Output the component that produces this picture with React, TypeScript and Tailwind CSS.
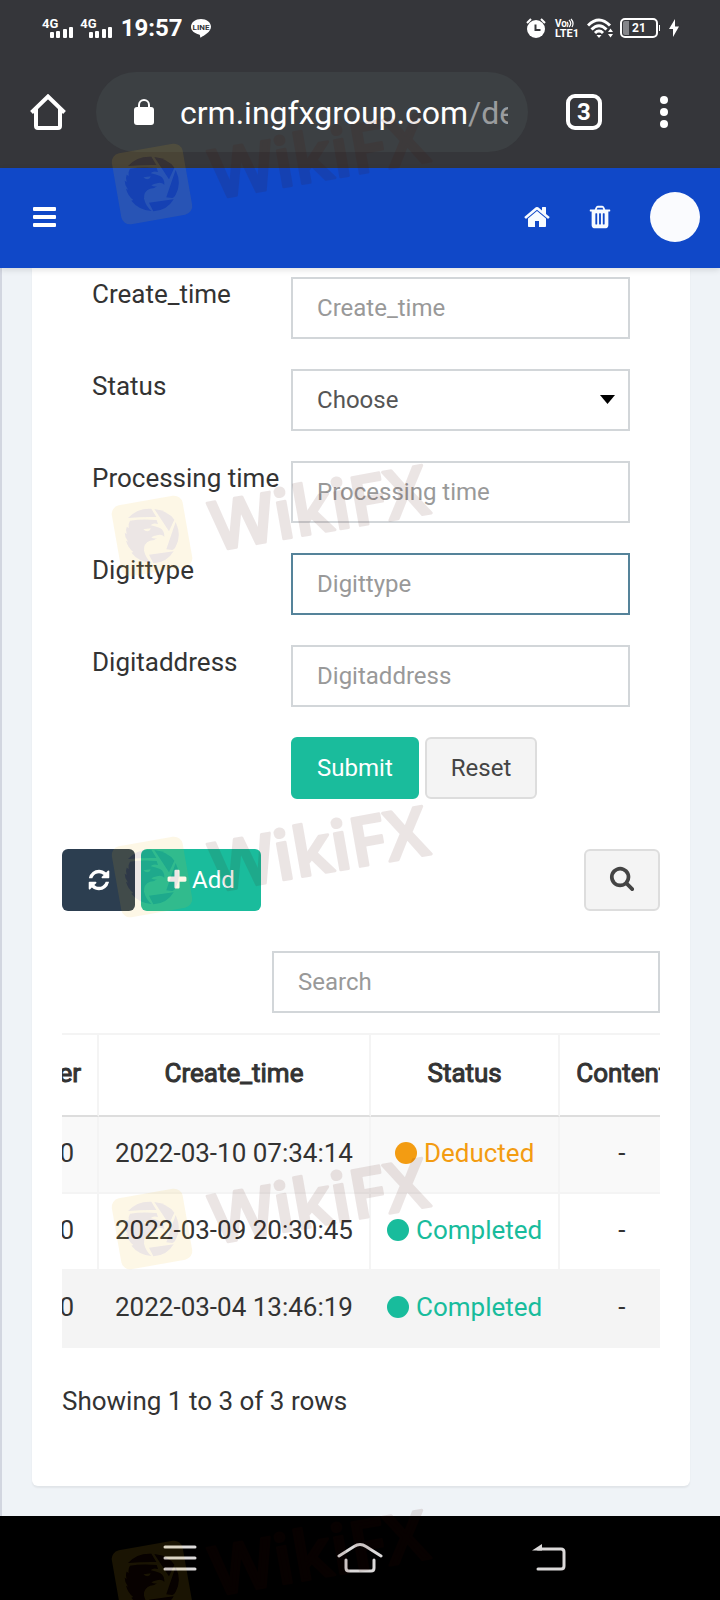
import React from 'react';

interface Field {
  id: string;
  label: string;
  type: 'text' | 'select';
  active?: boolean;
}

interface Row {
  id: number;
  order: string;
  createTime: string;
  status: 'Deducted' | 'Completed';
  content: string;
}

const fields: Field[] = [
  { id: 'create_time', label: 'Create_time', type: 'text' },
  { id: 'status', label: 'Status', type: 'select' },
  { id: 'processing_time', label: 'Processing time', type: 'text' },
  { id: 'digittype', label: 'Digittype', type: 'text', active: true },
  { id: 'digitaddress', label: 'Digitaddress', type: 'text' },
];

const rows: Row[] = [
  { id: 1, order: '0', createTime: '2022-03-10 07:34:14', status: 'Deducted', content: '-' },
  { id: 2, order: '0', createTime: '2022-03-09 20:30:45', status: 'Completed', content: '-' },
  { id: 3, order: '0', createTime: '2022-03-04 13:46:19', status: 'Completed', content: '-' },
];

const rowColors = ['bg-[#f9f9f9]', 'bg-white', 'bg-[#f4f4f4]'];

const glyphs = {
  home: 'M1472 992v480q0 26-19 45t-45 19h-384v-384h-256v384h-384q-26 0-45-19t-19-45v-480q0-1 .5-3t.5-3l575-474 575 474q1 2 1 6zm223-69l-62 74q-8 9-21 11h-3q-13 0-21-7l-692-577-692 577q-12 8-24 7-13-2-21-11l-62-74q-8-10-7-23.500t11-21.500l719-599q32-26 76-26t76 26l244 204v-195q0-14 9-23t23-9h192q14 0 23 9t9 23v408l219 182q10 8 11 21.500t-7 23.500z',
  trash:
    'M704 1376v-704q0-14-9-23t-23-9h-64q-14 0-23 9t-9 23v704q0 14 9 23t23 9h64q14 0 23-9t9-23zm256 0v-704q0-14-9-23t-23-9h-64q-14 0-23 9t-9 23v704q0 14 9 23t23 9h64q14 0 23-9t9-23zm256 0v-704q0-14-9-23t-23-9h-64q-14 0-23 9t-9 23v704q0 14 9 23t23 9h64q14 0 23-9t9-23zm-544-992h448l-48-117q-7-9-17-11h-317q-10 2-17 11zm928 32v64q0 14-9 23t-23 9h-96v948q0 83-47 143.500t-113 60.500h-832q-66 0-113-58.500t-47-141.500v-952h-96q-14 0-23-9t-9-23v-64q0-14 9-23t23-9h309l70-167q15-37 54-63t79-26h320q40 0 79 26t54 63l70 167h309q14 0 23 9t9 23z',
  refresh:
    'M1639 1056q0 5-1 7-64 268-268 434.500t-478 166.500q-146 0-282.500-55t-243.500-157l-129 129q-19 19-45 19t-45-19-19-45v-448q0-26 19-45t45-19h448q26 0 45 19t19 45-19 45l-137 137q71 66 161 102t187 36q134 0 250-65t186-179q11-17 53-117 8-23 30-23h192q13 0 22.500 9.500t9.500 22.500zm25-800v448q0 26-19 45t-45 19h-448q-26 0-45-19t-19-45 19-45l138-138q-148-137-349-137-134 0-250 65t-186 179q-11 17-53 117-8 23-30 23h-199q-13 0-22.500-9.500t-9.500-22.500v-7q65-268 270-434.500t480-166.500q146 0 284 55.500t245 156.500l130-129q19-19 45-19t45 19 19 45z',
  plus: 'M1600 736v192q0 40-28 68t-68 28h-416v416q0 40-28 68t-68 28h-192q-40 0-68-28t-28-68v-416h-416q-40 0-68-28t-28-68v-192q0-40 28-68t68-28h416v-416q0-40 28-68t68-28h192q40 0 68 28t28 68v416h416q40 0 68 28t28 68z',
  search:
    'M1216 832q0-185-131.500-316.500t-316.500-131.500-316.500 131.500-131.500 316.500 131.500 316.500 316.500 131.500 316.500-131.500 131.500-316.500zm512 832q0 52-38 90t-90 38q-54 0-90-38l-343-342q-179 124-399 124-143 0-273.500-55.500t-225-150-150-225-55.500-273.500 55.500-273.500 150-225 225-150 273.500-55.500 273.500 55.500 225 150 150 225 55.500 273.500q0 220-124 399l343 343q37 37 37 90z',
};

const Glyph: React.FC<{ name: keyof typeof glyphs; className?: string }> = ({ name, className }) => (
  <svg viewBox="0 0 1792 1792" fill="currentColor" className={className} aria-hidden="true">
    <path d={glyphs[name]} />
  </svg>
);

const Signal = () => (
  <div className="flex items-start">
    <span className="text-[13px] leading-3 font-bold">4G</span>
    <svg className="-ml-2 mt-2 h-3 w-6" viewBox="0 0 24 12" fill="currentColor" aria-hidden="true">
      <rect x="0" y="6" width="4" height="6" rx="1" />
      <rect x="6" y="5" width="4" height="7" rx="1" />
      <rect x="13" y="3" width="4" height="9" rx="1" />
      <rect x="19" y="1" width="4" height="11" rx="1" />
    </svg>
  </div>
);

const StatusBar = () => (
  <div className="flex h-14 items-center justify-between pr-[41px] pl-[42px]">
    <div className="flex items-center">
      <div className="flex gap-[6px]">
        <Signal />
        <Signal />
      </div>
      <span className="ml-2 text-[24px] leading-7 font-bold">19:57</span>
      <svg className="ml-2 h-5 w-5" viewBox="0 0 20 20" overflow="visible" aria-hidden="true">
        <path d="M10 1C4.600 1 0 4.300 0 8.800c0 3.800 3.400 6.800 8 7.600.8.200 1 .6 1 1.200l.2 1.700c.1.300.4.300.7.100C13 17.500 20 14 20 8.800 20 4.300 15.400 1 10 1z" fill="#fff" />
        <text x="10" y="12" textAnchor="middle" fontSize="8" fontWeight="700" fill="#35363a">
          LINE
        </text>
      </svg>
    </div>
    <div className="flex items-center">
      <svg className="h-5 w-5" viewBox="0 0 20 20" aria-hidden="true">
        <circle cx="10" cy="11" r="9" fill="#fff" />
        <path d="M1 5l4-4M19 5l-4-4" stroke="#fff" strokeWidth="2" />
        <path d="M9.500 6.500v5.500h5" stroke="#35363a" strokeWidth="2" fill="none" />
      </svg>
      <svg className="ml-[9px] h-5 w-6" viewBox="0 0 24 20" overflow="visible" fill="#fff" aria-hidden="true">
        <text x="0" y="9" fontSize="10" fontWeight="700">
          Vo
        </text>
        <path d="M12 4q2 2 0 5M14 2q3.500 3.500 0 7M16 1q3.500 4 1 8" stroke="#fff" strokeWidth="1.200" fill="none" />
        <text x="0" y="19" fontSize="11" fontWeight="700">
          LTE1
        </text>
      </svg>
      <svg className="ml-2 h-5 w-[26px]" viewBox="0 0 26 20" fill="none" stroke="#fff" aria-hidden="true">
        <path d="M1 7.500Q12 -3.500 23 7.500" strokeWidth="3" />
        <path d="M4.500 11.500Q12 4 19.500 11.500" strokeWidth="3" />
        <path d="M8 15Q12 11 16 15" strokeWidth="3" />
        <path d="M9.500 17L12 20l2.500-3z" fill="#fff" stroke="none" />
        <path d="M21 14l2.500-3.500L26 14zM21 16l2.500 3.500L26 16z" fill="#fff" stroke="none" />
      </svg>
      <div className="ml-[7px] flex items-center">
        <div className="flex h-5 w-[38px] items-center rounded-[5px] border-2 border-white">
          <span className="ml-px h-[14px] w-[6px] rounded-l-[2px] bg-[#85868a]" />
          <span className="ml-[3px] text-[12px] leading-4 font-bold">21</span>
        </div>
        <span className="ml-px h-[6px] w-px bg-white" />
      </div>
      <svg className="ml-[9px] h-[18px] w-[10px]" viewBox="0 0 10 18" fill="#fff" aria-hidden="true">
        <path d="M6 0L0 10h4v8l6-10.500H6z" />
      </svg>
    </div>
  </div>
);

const AddressBar = () => (
  <div className="flex items-center py-4 pr-[52px] pl-[30px]">
    <button type="button" aria-label="Home page">
      <svg className="block h-9 w-9" viewBox="0 0 36 36" fill="none" stroke="#fff" strokeWidth="4" aria-hidden="true">
        <path d="M1.500 18.500L18 2.500l16.500 16" />
        <path d="M6 15v17q0 2 2 2h20q2 0 2-2V15" />
      </svg>
    </button>
    <div className="ml-[30px] flex h-20 min-w-0 flex-1 items-center rounded-full bg-[#3c4043] pr-5 pl-[38px]">
      <svg className="h-[26px] w-5 shrink-0" viewBox="0 0 20 26" aria-hidden="true">
        <rect x="0" y="8" width="20" height="18" rx="3" fill="#fff" />
        <path d="M5 9V6a5 5 0 0 1 10 0v3" fill="none" stroke="#fff" strokeWidth="2" />
      </svg>
      <span className="ml-[26px] flex-1 overflow-hidden pt-[2px] text-[32px] leading-10 whitespace-nowrap">
        crm.ingfxgroup.com<span className="text-[#9a9c9e]">/de</span>
      </span>
    </div>
    <button
      type="button"
      aria-label="Open tabs"
      className="ml-[38px] flex h-9 w-9 items-center justify-center rounded-[9px] border-4 border-white text-[24px] leading-6 font-bold"
    >
      3
    </button>
    <button type="button" aria-label="Menu" className="ml-[58px] flex flex-col gap-1">
      <span className="h-2 w-2 rounded-full bg-white" />
      <span className="h-2 w-2 rounded-full bg-white" />
      <span className="h-2 w-2 rounded-full bg-white" />
    </button>
  </div>
);

const AppHeader = () => (
  <header className="relative flex h-[100px] items-center bg-[#1048c8] pr-5 pb-[2px] pl-[33px] text-[#f7fbff] shadow-[0_2px_6px_rgba(0,0,0,0.12)]">
    <button type="button" aria-label="Toggle sidebar" className="flex flex-col gap-1">
      <span className="h-1 w-[23px] rounded-[1px] bg-white" />
      <span className="h-1 w-[23px] rounded-[1px] bg-white" />
      <span className="h-1 w-[23px] rounded-[1px] bg-white" />
    </button>
    <a href="#home" aria-label="Home" className="ml-auto">
      <Glyph name="home" className="block h-7 w-7" />
    </a>
    <button type="button" aria-label="Clear cache" className="ml-9">
      <Glyph name="trash" className="block h-[26px] w-[26px]" />
    </button>
    <button type="button" aria-label="Profile" className="ml-[37px] h-[50px] w-[50px] rounded-full bg-[#fafbfe]" />
  </header>
);

const FilterForm = () => (
  <form className="flex flex-col gap-[30px] px-[30px]" onSubmit={(e) => e.preventDefault()}>
    {fields.map((field) => (
      <div key={field.id} className="grid grid-cols-[37%_1fr] items-start">
        <label htmlFor={field.id} className="pt-px text-[26px] leading-8 whitespace-nowrap">
          {field.label}
        </label>
        {field.type === 'select' ? (
          <div className="relative">
            <select
              id={field.id}
              className="block h-[62px] w-full appearance-none border-2 border-[#d2d6d9] bg-white px-6 text-[24px] leading-8 text-[#555] outline-none"
            >
              <option>Choose</option>
            </select>
            <svg className="pointer-events-none absolute top-[26px] right-[15px] h-[9px] w-[15px]" viewBox="0 0 15 9" aria-hidden="true">
              <path d="M0 0h15L7.500 9z" />
            </svg>
          </div>
        ) : (
          <input
            id={field.id}
            type="text"
            placeholder={field.label}
            className={`block h-[62px] w-full border-2 bg-white px-6 text-[24px] leading-8 outline-none placeholder:text-[#999] ${
              field.active ? 'border-[#55839a]' : 'border-[#d2d6d9]'
            }`}
          />
        )}
      </div>
    ))}
    <div className="ml-[37%] flex gap-[6px] text-[24px] leading-8">
      <button type="submit" className="h-[62px] rounded-[6px] border-2 border-[#1abc9c] bg-[#1abc9c] px-6 text-white">
        Submit
      </button>
      <button type="reset" className="h-[62px] rounded-[6px] border-2 border-[#ddd] bg-[#f4f4f4] px-6 text-[#444]">
        Reset
      </button>
    </div>
  </form>
);

const Toolbar = () => (
  <div className="mt-[50px] flex gap-[6px] text-[24px] leading-8">
    <button type="button" aria-label="Refresh" className="flex h-[62px] w-[73px] items-center justify-center rounded-[6px] bg-[#2c3e50] text-white">
      <Glyph name="refresh" className="h-6 w-6" />
    </button>
    <button type="button" className="flex h-[62px] items-center rounded-[6px] bg-[#1abc9c] pr-[26px] pl-6 text-white">
      <Glyph name="plus" className="mr-[3px] h-6 w-6" />
      Add
    </button>
    <button
      type="button"
      aria-label="Advanced search"
      className="ml-auto flex h-[62px] w-[76px] items-center justify-center rounded-[6px] border-2 border-[#ddd] bg-[#f4f4f4] pb-1 text-[#444]"
    >
      <Glyph name="search" className="h-[26px] w-[26px]" />
    </button>
  </div>
);

const RecordsTable = () => (
  <div className="mt-5 overflow-hidden">
    <table className="-ml-5 w-max border-separate border-spacing-0 text-center text-[26px] leading-8 whitespace-nowrap">
      <thead className="[-webkit-text-stroke:1px_#333]">
        <tr className="h-[84px]">
          <th className="w-[57px] border-t-2 border-r-2 border-b-2 border-[#f4f4f4] border-b-[#ddd] pr-4 pb-1 text-right font-normal">er</th>
          <th className="border-t-2 border-r-2 border-b-2 border-[#f4f4f4] border-b-[#ddd] px-4 pb-1 font-normal">Create_time</th>
          <th className="border-t-2 border-r-2 border-b-2 border-[#f4f4f4] border-b-[#ddd] px-4 pb-1 font-normal">Status</th>
          <th className="border-t-2 border-r-2 border-b-2 border-[#f4f4f4] border-b-[#ddd] px-4 pb-1 font-normal">Content</th>
        </tr>
      </thead>
      <tbody>
        {rows.map((row, i) => (
          <tr key={row.id} className={`h-[77px] ${rowColors[i]}`}>
            <td className="border-r-2 border-b-2 border-[#f4f4f4] pr-[23px] pb-1 text-right">{row.order}</td>
            <td className="border-r-2 border-b-2 border-[#f4f4f4] px-4 pb-1">{row.createTime}</td>
            <td className="border-r-2 border-b-2 border-[#f4f4f4] px-4 pb-1">
              <span
                className={`flex items-center justify-center gap-[7px] ${
                  row.status === 'Deducted' ? 'text-[#f39c12]' : 'text-[#18bc9c]'
                }`}
              >
                <span className="h-[22px] w-[22px] rounded-full bg-current" />
                {row.status}
              </span>
            </td>
            <td className="border-r-2 border-b-2 border-[#f4f4f4] px-4 pb-1">{row.content}</td>
          </tr>
        ))}
      </tbody>
    </table>
  </div>
);

const SystemNav = () => (
  <nav className="grid h-[84px] grid-cols-[1fr_46px_1fr] items-center bg-black">
    <button type="button" aria-label="Recent apps" className="mr-[140px] justify-self-end">
      <svg className="block h-8 w-[34px]" viewBox="0 0 34 32" stroke="#dcdada" strokeWidth="3" strokeLinecap="round" aria-hidden="true">
        <path d="M2 5h30M2 16h30M2 27h30" />
      </svg>
    </button>
    <button type="button" aria-label="Home screen">
      <svg className="block h-8 w-[46px]" viewBox="0 0 46 32" fill="none" stroke="#dcdada" strokeWidth="3" strokeLinecap="round" strokeLinejoin="round" aria-hidden="true">
        <path d="M2 14L17 4.500q6-4 12 0l15 9.500" />
        <path d="M9 18v8q0 3 3 3h22q3 0 3-3v-8" />
      </svg>
    </button>
    <button type="button" aria-label="Back" className="ml-[149px] justify-self-start">
      <svg className="block h-8 w-[34px]" viewBox="0 0 34 32" fill="none" stroke="#dcdada" strokeWidth="3" strokeLinecap="round" aria-hidden="true">
        <path d="M6 7h23q3 0 3 3v14q0 3-3 3H6" />
        <path d="M0 8.500L10 2v6.500z" fill="#dcdada" stroke="none" />
      </svg>
    </button>
  </nav>
);

const stampOffsets = [0, 352, 693, 1045, 1397];

const Watermarks = () => (
  <svg className="pointer-events-none absolute inset-0 h-full w-full" aria-hidden="true">
    <defs>
      <g id="eagle">
        <path d="M-72-54Q-45-84-2-82L13-57Q-30-58-72-54z" />
        <path d="M7-81Q48-76 67-49L51-14Z" />
        <path d="M71-42Q90-2 71 32Q66 42 61 42L43 40Z" />
        <path d="M-9 56L65 46Q45 80 4 82Z" />
        <path d="M-66-46Q-30-52 14-48L18-36Q2-40-4-32Q12-28 24-24Q38-16 37 2Q30-5 18-3Q4 0-2 4Q6 10 16 6Q8 14-6 14Q-26 22-24 44Q-18 68-1 81Q-40 78-62 50L-56 48Q-72 36-78 14L-72 17Q-82 4-82-10L-76-6Q-80-18-76-28L-70-24Q-72-38-66-46zM-26-20Q-16-10-6-18L-4-23Q-16-22-26-20z" />
      </g>
      <mask id="eagle-cut" maskUnits="userSpaceOnUse" x="-140" y="-140" width="280" height="280">
        <rect x="-140" y="-140" width="280" height="280" fill="#fff" />
        <use href="#eagle" fill="#000" />
      </mask>
      <g id="stamp">
        <g transform="translate(152 184) scale(0.333)">
          <g mask="url(#eagle-cut)">
            <rect x="-108" y="-108" width="216" height="216" rx="26" transform="rotate(-10)" fill="#f0b41e" fillOpacity="0.11" />
          </g>
          <use href="#eagle" fill="#460a00" fillOpacity="0.1" />
        </g>
        <g opacity="0.1">
          <text
            transform="translate(215 199) rotate(-10)"
            fontSize="68"
            fontWeight="600"
            fontFamily="Open Sans, sans-serif"
            fill="#460a00"
            stroke="#460a00"
            strokeWidth="3"
            strokeLinejoin="round"
          >
            WikiFX
          </text>
        </g>
      </g>
    </defs>
    {stampOffsets.map((y) => (
      <use key={y} href="#stamp" y={y} />
    ))}
  </svg>
);

const App: React.FC = () => (
  <div className="relative overflow-hidden font-['Roboto',sans-serif] text-[#333]">
    <div className="bg-[#35363a] text-white">
      <StatusBar />
      <AddressBar />
    </div>
    <AppHeader />
    <main className="border-l-2 border-[#d2d6e0] bg-[#eff3f7] pr-[30px] pb-[30px] pl-[30px]">
      <section className="rounded-b-[6px] bg-white px-[30px] pt-[9px] pb-[69px] shadow-[0_2px_2px_rgba(0,0,0,0.06)]">
        <FilterForm />
        <Toolbar />
        <div className="mt-10 flex justify-end">
          <input
            type="search"
            aria-label="Search"
            placeholder="Search"
            className="block h-[62px] w-[388px] border-2 border-[#d2d6d9] bg-white px-6 text-[24px] leading-8 outline-none placeholder:text-[#999]"
          />
        </div>
        <RecordsTable />
        <p className="mt-[37px] text-[26px] leading-8">Showing 1 to 3 of 3 rows</p>
      </section>
    </main>
    <SystemNav />
    <Watermarks />
  </div>
);

export default App;
